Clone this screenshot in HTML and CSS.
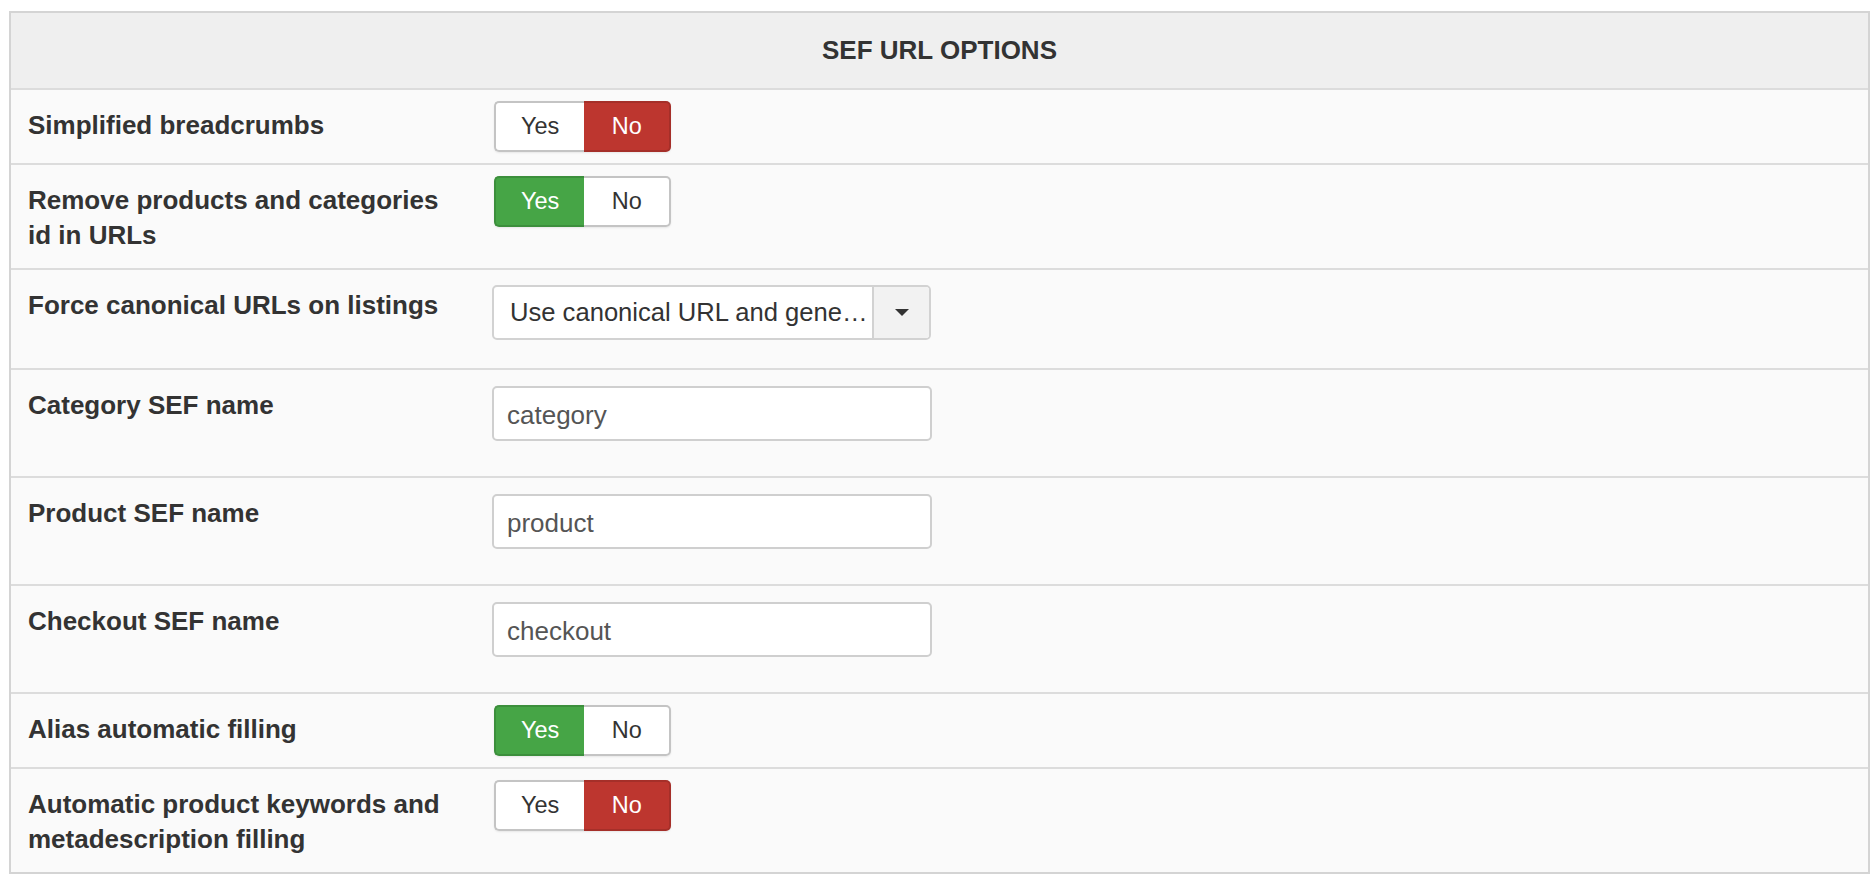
FILE: index.html
```html
<!DOCTYPE html>
<html lang="en">
<head>
    <meta charset="UTF-8">
    <meta name="viewport" content="width=device-width, initial-scale=1.0">
    <title>SEF URL options</title>
    <link rel="stylesheet" href="styles.css">
</head>
<body>

<div class="options">
    <div class="options-head">SEF URL OPTIONS</div>

    <div class="option-row">
        <label class="option-label">Simplified breadcrumbs</label>
        <div class="option-control">
            <div class="toggle">
                <span class="toggle-btn">Yes</span>
                <span class="toggle-btn active-no">No</span>
            </div>
        </div>
    </div>

    <div class="option-row">
        <label class="option-label">Remove products and categories id in URLs</label>
        <div class="option-control">
            <div class="toggle">
                <span class="toggle-btn active-yes">Yes</span>
                <span class="toggle-btn">No</span>
            </div>
        </div>
    </div>

    <div class="option-row">
        <label class="option-label">Force canonical URLs on listings</label>
        <div class="option-control">
            <div class="select">
                <span class="select-value">Use canonical URL and gene…</span>
                <span class="select-arrow"><b class="caret"></b></span>
            </div>
        </div>
    </div>

    <div class="option-row">
        <label class="option-label" for="category_sef">Category SEF name</label>
        <div class="option-control">
            <input type="text" class="text-input" id="category_sef" value="category">
        </div>
    </div>

    <div class="option-row">
        <label class="option-label" for="product_sef">Product SEF name</label>
        <div class="option-control">
            <input type="text" class="text-input" id="product_sef" value="product">
        </div>
    </div>

    <div class="option-row">
        <label class="option-label" for="checkout_sef">Checkout SEF name</label>
        <div class="option-control">
            <input type="text" class="text-input" id="checkout_sef" value="checkout">
        </div>
    </div>

    <div class="option-row">
        <label class="option-label">Alias automatic filling</label>
        <div class="option-control">
            <div class="toggle">
                <span class="toggle-btn active-yes">Yes</span>
                <span class="toggle-btn">No</span>
            </div>
        </div>
    </div>

    <div class="option-row">
        <label class="option-label">Automatic product keywords and metadescription filling</label>
        <div class="option-control">
            <div class="toggle">
                <span class="toggle-btn">Yes</span>
                <span class="toggle-btn active-no">No</span>
            </div>
        </div>
    </div>
</div>

</body>
</html>
```

FILE: styles.css
```css
body {
    margin: 0;
    font-family: "Liberation Sans", Arial, sans-serif;
    font-size: 26px;
    color: #333;
    background-color: #ffffff;
}
.options {
    margin: 11px 6px 0 9px;
    border: 2px solid #d4d4d4;
    background-color: #fafafa;
}
.options-head {
    height: 75px;
    display: flex;
    justify-content: center;
    align-items: center;
    background-color: #efefef;
    font-weight: bold;
}
.option-row {
    display: grid;
    grid-template-columns: 464px 1fr;
    align-items: start;
    border-top: 2px solid #dcdcdc;
    padding: 11px 16px 11px 17px;
}
.option-label {
    display: block;
    width: 430px;
    padding-top: 6.5px;
    margin-bottom: 4.5px;
    line-height: 35px;
    font-weight: bold;
}

/* yes / no radio group */
.toggle {
    display: inline-flex;
    margin-left: 2px;
    height: 51px;
    border-radius: 5px;
    box-shadow: 0 1px 2px rgba(0, 0, 0, 0.08);
}
.toggle-btn {
    min-width: 87px;
    padding: 0 25px;
    box-sizing: border-box;
    text-align: center;
    font-size: 23.5px;
    line-height: 47px;
    background-color: #ffffff;
    border: 2px solid #c4c4c4;
    color: #333;
}
.toggle-btn:first-child {
    border-radius: 5px 0 0 5px;
    border-right: none;
}
.toggle-btn:last-child {
    border-radius: 0 5px 5px 0;
    border-left: none;
}
.active-no {
    background-color: #bd362f;
    border-color: #a52f29;
    color: #ffffff;
}
.active-yes {
    background-color: #46a546;
    border-color: #3c8f3c;
    color: #ffffff;
}

/* chosen-style select */
.select {
    display: flex;
    width: 439px;
    height: 55px;
    box-sizing: border-box;
    margin-top: 4px;
    margin-bottom: 17px;
    border: 2px solid #d2d2d2;
    border-radius: 5px;
    background-color: #ffffff;
    overflow: hidden;
}
.select-value {
    flex: 1;
    padding-left: 16px;
    font-size: 25.6px;
    line-height: 51px;
    white-space: nowrap;
    overflow: hidden;
}
.select-arrow {
    width: 55px;
    display: flex;
    justify-content: center;
    align-items: center;
    border-left: 2px solid #d2d2d2;
    background-color: #f2f2f2;
}
.caret {
    width: 0;
    height: 0;
    border-left: 7px solid transparent;
    border-right: 7px solid transparent;
    border-top: 7px solid #333;
}

.text-input {
    display: block;
    width: 440px;
    height: 55px;
    box-sizing: border-box;
    margin: 5px 0 24px;
    padding: 4px 13px 0;
    border: 2px solid #cfcfcf;
    border-radius: 5px;
    font-family: "Liberation Sans", Arial, sans-serif;
    font-size: 26px;
    color: #555;
    background-color: #ffffff;
}
```
